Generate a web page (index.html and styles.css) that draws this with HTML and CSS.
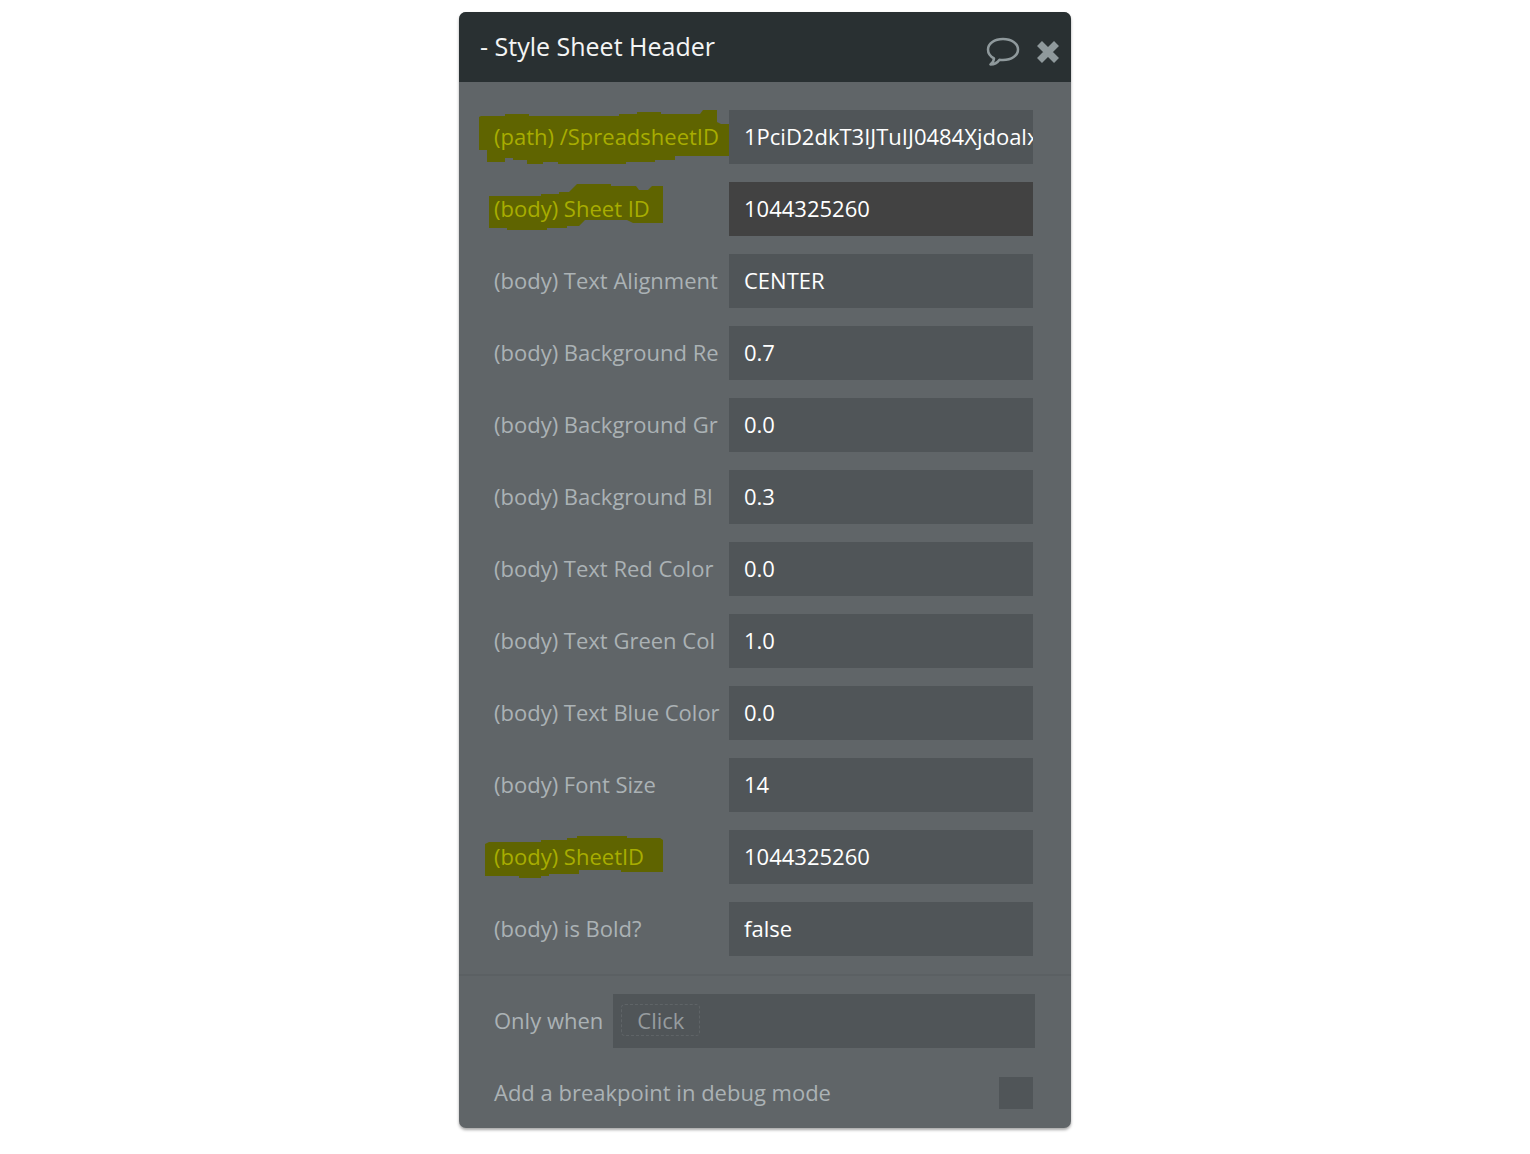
FILE: index.html
```
<!DOCTYPE html>
<html lang="en">
<head>
    <meta charset="UTF-8">
    <meta name="viewport" content="width=device-width, initial-scale=1.0">
    <title>Style Sheet Header</title>
    <link rel="stylesheet" href="styles.css">
</head>
<body>

<form class="panel">
    <div class="panel-header">
        <h1>- Style Sheet Header</h1>
        <div class="panel-actions">
            <button type="button" class="icon-btn" aria-label="Comment">
                <svg width="34" height="30" viewBox="0 0 34 30" fill="none" stroke="#8f999c" stroke-width="2.500" stroke-linejoin="round">
                    <path d="M17 2C8.500 2 2 6.500 2 12.500c0 4 2.500 7 6 8.800 0 2.500-1.400 4.400-3.500 6.200 4 0 7-1.800 9-4.700 1 .2 2.300.2 3.500.2 8.500 0 15-4.500 15-10.500S25.500 2 17 2z"/>
                </svg>
            </button>
            <button type="button" class="icon-btn" aria-label="Close">
                <svg width="24" height="24" viewBox="0 0 24 24" fill="none" stroke="#8f999c" stroke-width="7">
                    <path d="M3.500 3.500l17 17M20.500 3.500l-17 17"/>
                </svg>
            </button>
        </div>
    </div>

    <!-- Parameters -->
    <div class="params">
        <div class="row marked">
            <svg class="marker" width="250" height="54" viewBox="0 0 250 54">
                <path d="M0 7L2 6H26V4H50V6H140V4H158V2H182V4H221L224 0H238V12L242 14H250V46H196V50H176V52H147V54H79V52H64V54H48V50H34V48H26V52H8V40H0z"/>
            </svg>
            <label for="spreadsheet">(path) /SpreadsheetID</label>
            <input type="text" id="spreadsheet" value="1PciD2dkT3IJTuIJ0484Xjdoalx">
        </div>
        <div class="row marked">
            <svg class="marker" width="250" height="54" viewBox="0 0 250 54">
                <path d="M10 14H62V12H80V10H90L98 2H132V4H157L160 8H169L173 4H184V41H154L148 38H106L100 44H88V46H68V48H28V46H10z"/>
            </svg>
            <label for="sheet">(body) Sheet ID</label>
            <input type="text" id="sheet" class="active" value="1044325260">
        </div>
        <div class="row">
            <label for="align">(body) Text Alignment</label>
            <input type="text" id="align" value="CENTER">
        </div>
        <div class="row">
            <label for="bg-red">(body) Background Re</label>
            <input type="text" id="bg-red" value="0.7">
        </div>
        <div class="row">
            <label for="bg-green">(body) Background Gr</label>
            <input type="text" id="bg-green" value="0.0">
        </div>
        <div class="row">
            <label for="bg-blue">(body) Background Bl</label>
            <input type="text" id="bg-blue" value="0.3">
        </div>
        <div class="row">
            <label for="text-red">(body) Text Red Color</label>
            <input type="text" id="text-red" value="0.0">
        </div>
        <div class="row">
            <label for="text-green">(body) Text Green Col</label>
            <input type="text" id="text-green" value="1.0">
        </div>
        <div class="row">
            <label for="text-blue">(body) Text Blue Color</label>
            <input type="text" id="text-blue" value="0.0">
        </div>
        <div class="row">
            <label for="font-size">(body) Font Size</label>
            <input type="text" id="font-size" value="14">
        </div>
        <div class="row marked">
            <svg class="marker" width="250" height="54" viewBox="0 0 250 54">
                <path d="M6 14L10 12H62V10H88V8H98V6H148V8H181L184 10V42H142V40H100V44H70V46H62V48H40V46H6z"/>
            </svg>
            <label for="sheet2">(body) SheetID</label>
            <input type="text" id="sheet2" value="1044325260">
        </div>
        <div class="row">
            <label for="bold">(body) is Bold?</label>
            <input type="text" id="bold" value="false">
        </div>
    </div>

    <!-- Condition and debug -->
    <div class="options">
        <div class="condition">
            <span id="only-when">Only when</span>
            <div class="expression" role="group" aria-labelledby="only-when">
                <button type="button" class="chip">Click</button>
            </div>
        </div>
        <div class="breakpoint">
            <label for="breakpoint">Add a breakpoint in debug mode</label>
            <input type="checkbox" id="breakpoint">
        </div>
    </div>
</form>

</body>
</html>
```
FILE: styles.css
```
* {
    box-sizing: border-box;
}
body {
    margin: 0;
    padding: 12px 16px;
    background-color: #fff;
    font-family: "Open Sans", sans-serif;
    font-size: 22px;
    line-height: 32px;
    color: #abb2b5;
}
.panel {
    max-width: 612px;
    margin: 0 auto;
    background-color: #606568;
    border-radius: 7px;
    box-shadow: 0 2px 3px rgba(0, 0, 0, 0.35);
}
.panel-header {
    display: flex;
    justify-content: space-between;
    height: 70px;
    padding: 18px 11px 0 21px;
    background-color: #293032;
    border-radius: 7px 7px 0 0;
}
.panel-header h1 {
    margin: 0;
    font-size: 25px;
    font-weight: 400;
    line-height: 32px;
    color: #f4f5f5;
}
.panel-actions {
    display: flex;
    align-items: center;
    gap: 16px;
    height: 44px;
}
.icon-btn {
    display: flex;
    padding: 0;
    border: none;
    background: none;
    cursor: pointer;
}

/* Parameters */
.params {
    display: flex;
    flex-direction: column;
    gap: 18px;
    padding: 28px 38px 18px 35px;
    border-bottom: 2px solid #5b6063;
}
.row {
    position: relative;
    display: flex;
}
.row label {
    flex: 1;
    position: relative;
    padding: 10px 0;
    white-space: nowrap;
}
.row input {
    width: 304px;
    height: 54px;
    padding: 0 0 2px 15px;
    border: none;
    background-color: #505558;
    color: #fff;
    font: inherit;
}
.row input.active {
    background-color: #424242;
}
.marker {
    position: absolute;
    top: 0;
    left: -15px;
    fill: #5f6400;
}
.marked label {
    color: #a8ad00;
}

/* Condition and debug */
.options {
    display: flex;
    flex-direction: column;
    gap: 18px;
    padding: 18px 36px 8px 35px;
}
.condition {
    display: flex;
    align-items: center;
    gap: 10px;
}
.expression {
    flex: 1;
    display: flex;
    align-items: center;
    height: 54px;
    padding: 0 8px 2px;
    background-color: #505558;
}
.condition span,
.breakpoint label {
    padding-bottom: 2px;
}
.chip {
    padding: 0 15px;
    border: 1px dashed #5f6467;
    border-radius: 4px;
    background: none;
    color: #969c9f;
    font: inherit;
    line-height: 30px;
    cursor: pointer;
}
.breakpoint {
    display: flex;
    align-items: center;
    justify-content: space-between;
    height: 54px;
    padding-right: 2px;
}
.breakpoint input {
    appearance: none;
    width: 34px;
    height: 32px;
    margin: 0;
    background-color: #505558;
}
```
